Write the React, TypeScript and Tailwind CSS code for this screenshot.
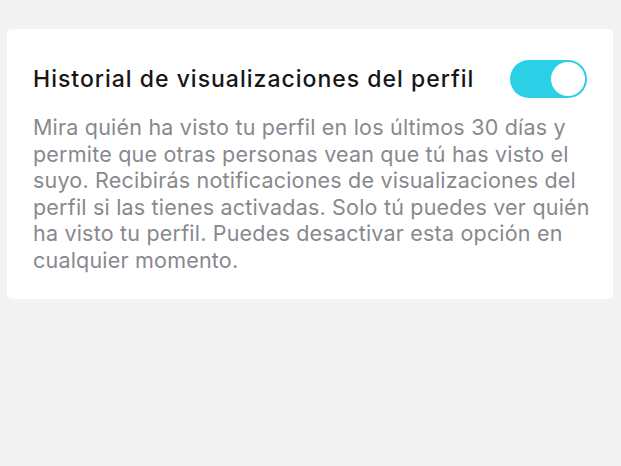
import React from "react";

export default function App() {
  return (
    <div
      className="w-[621px] h-[466px] bg-[#f3f3f3] pt-[29px]"
      style={{ fontFamily: "Inter, 'Liberation Sans', sans-serif" }}
    >
      <div className="ml-[7px] w-[606px] bg-white rounded-[5px] pl-[26px] pr-[20px] pt-[31px] pb-[25px]">
        <div className="flex items-center justify-between h-[38px]">
          <div className="text-[23px] font-medium text-[#161616] leading-[38px] tracking-[1px] whitespace-nowrap">
            Historial de visualizaciones del perfil
          </div>
          <div className="w-[77px] h-[38px] rounded-full bg-[#2bd0e6] flex items-center justify-end pr-[2px] mr-[6px]">
            <div className="w-[34px] h-[34px] rounded-full bg-white" />
          </div>
        </div>
        <p className="mt-[16px] text-[21.5px] leading-[26.6px] tracking-[0.2px] text-[#88898e] whitespace-nowrap">
          Mira quién ha visto tu perfil en los últimos 30 días y<br />permite que otras personas vean que tú has visto el<br />suyo. Recibirás notificaciones de visualizaciones del<br />perfil si las tienes activadas. Solo tú puedes ver quién<br />ha visto tu perfil. Puedes desactivar esta opción en<br />cualquier momento.
        </p>
      </div>
    </div>
  );
}
